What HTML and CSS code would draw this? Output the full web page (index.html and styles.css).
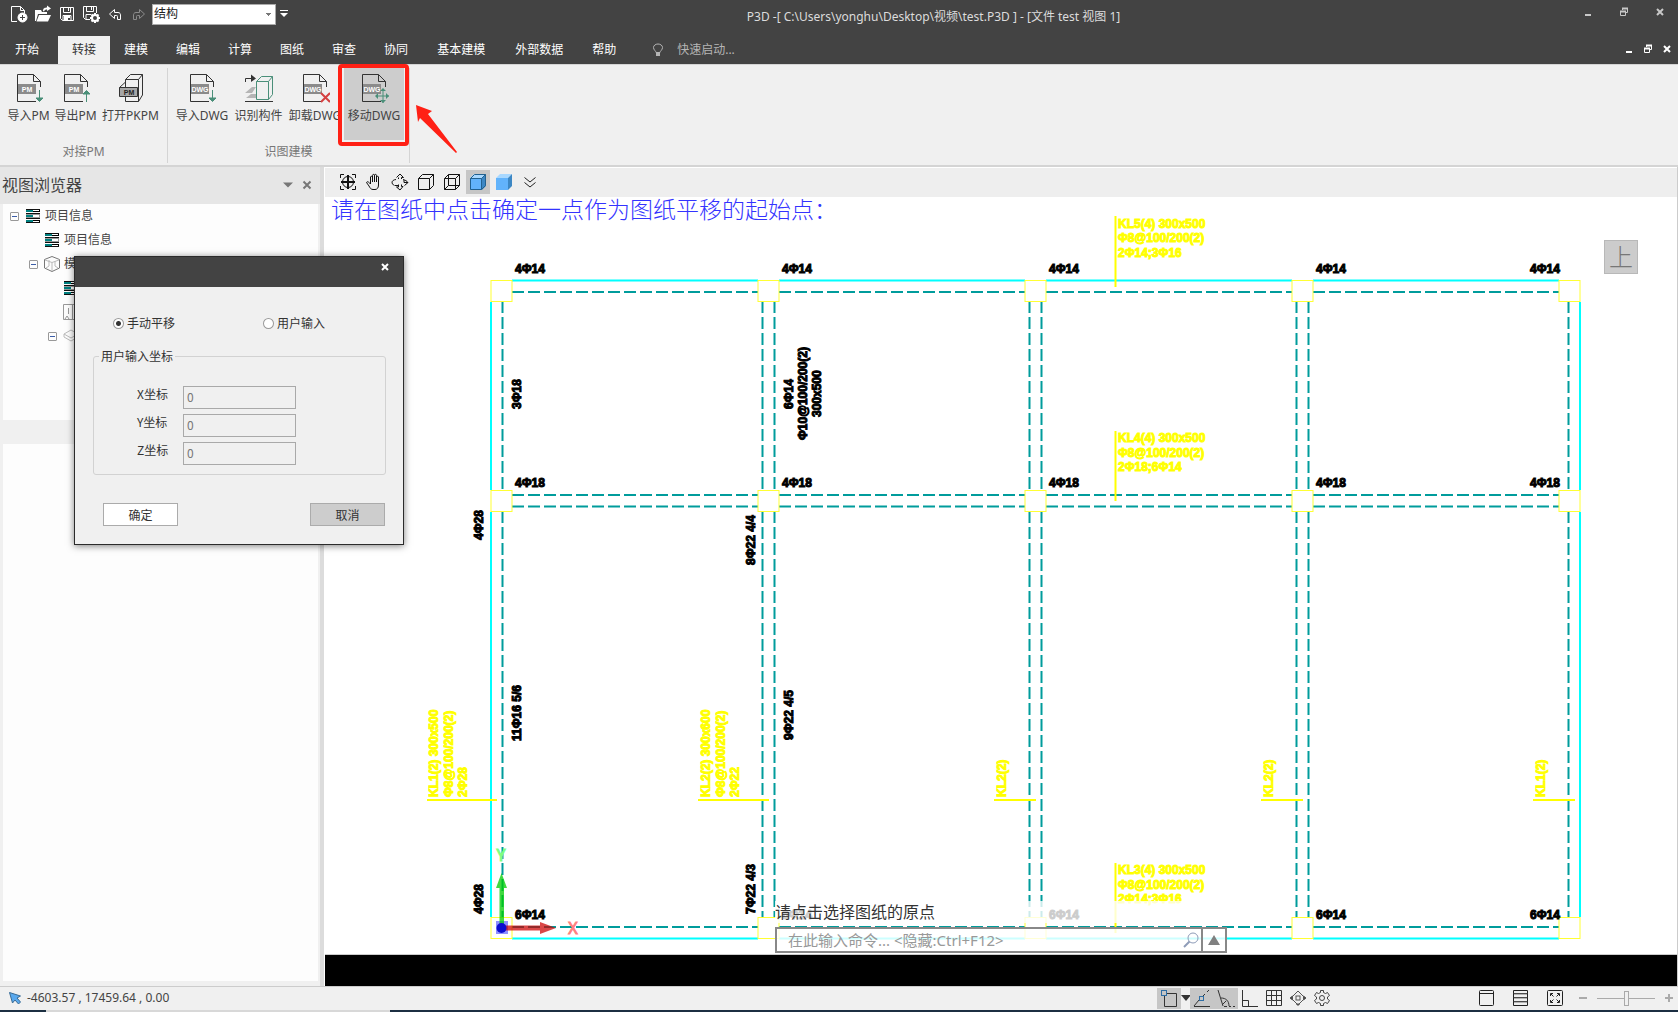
FILE: index.html
```html
<!DOCTYPE html>
<html lang="zh-CN">
<head>
    <meta charset="UTF-8">
    <meta name="viewport" content="width=device-width, initial-scale=1.0">
    <title>P3D</title>
    <link rel="stylesheet" href="styles.css">
</head>
<body>

    <!-- 标题栏 -->
    <header class="header">
        <div class="titlebar">
            <div class="quick">
                <button class="quick-btn" aria-label="新建"><svg width="18" height="18" viewBox="0 0 18 18" fill="none" stroke="#fff"><path d="M7 16.500H1.500V1.500H10.500L14.500 5.500V8M10.500 1.500V5.500H14.500"/><circle cx="12.500" cy="12.500" r="4.500" fill="#fff"/><path d="M12.500 10V15M10 12.500H15" stroke="#434343"/></svg></button>
                <button class="quick-btn" aria-label="打开"><svg width="18" height="18" viewBox="0 0 18 18" fill="#fff"><path d="M1 5H7L8 7H13V9H4L2 16H1ZM5 10H17L14 16.500H2.500ZM9 6C9 3 11 2.500 13 2.500V0.500L17 3.500L13 6V4.500C11.500 4.500 10.500 5 10 6.500Z"/></svg></button>
                <button class="quick-btn" aria-label="保存"><svg width="18" height="18" viewBox="0 0 18 18" fill="none" stroke="#fff"><path d="M2.500 2.500H15.500V15.500H4.500L2.500 13.500ZM5.500 2.500V7.500H12.500V2.500M5 15V10.500H13V15M10.500 3V6"/><path d="M6 12H12M6 14H10" stroke-width="2"/></svg></button>
                <button class="quick-btn" aria-label="另存为"><svg width="18" height="18" viewBox="0 0 18 18" fill="none" stroke="#fff"><path d="M8 14.500H3.500L1.500 12.500V1.500H14.500V8M4.500 1.500V6.500H11.500V1.500M4 14V9.500H9M9.500 2V5"/><circle cx="13" cy="13" r="3" stroke-width="2"/><path d="M13 8V10M13 16V18M8 13H10M16 13H18M9.500 9.500L11 11M15 15L16.500 16.500M9.500 16.500L11 15M15 11L16.500 9.500" stroke-width="2"/></svg></button>
                <button class="quick-btn" aria-label="撤销"><svg width="18" height="18" viewBox="0 0 18 18" fill="none" stroke="#fff"><path d="M8.500 4.500V7.500H12C14 7.500 14.500 9 14.500 10V14.500H11.500V11.500C11.500 10.500 11 10.500 10.500 10.500H8.500V13.500L3.500 9Z"/></svg></button>
                <button class="quick-btn" aria-label="重做"><svg width="18" height="18" viewBox="0 0 18 18" fill="none" stroke="#8b8b8b"><path d="M9.500 4.500V7.500H6C4 7.500 3.500 9 3.500 10V14.500H6.500V11.500C6.500 10.500 7 10.500 7.500 10.500H9.500V13.500L14.500 9Z"/></svg></button>
            </div>
            <select class="mode" aria-label="专业">
                <option>结构</option>
            </select>
            <button class="more" aria-label="自定义"><svg width="8" height="8" viewBox="0 0 8 8"><path d="M0 0.500H8" stroke="#fff"/><path d="M0 3H8L4 7Z" fill="#fff"/></svg></button>
            <h1 class="title">P3D -[ C:\Users\yonghu\Desktop\视频\test.P3D ] - [文件 test 视图 1]</h1>
            <div class="window-btns">
                <button aria-label="最小化"><svg width="10" height="10" viewBox="0 0 10 10"><use href="#win-min"/></svg></button>
                <button aria-label="还原"><svg width="10" height="10" viewBox="0 0 10 10"><use href="#win-restore"/></svg></button>
                <button aria-label="关闭"><svg width="10" height="10" viewBox="0 0 10 10"><use href="#win-close"/></svg></button>
            </div>
        </div>

        <!-- 选项卡 -->
        <nav class="tabs">
            <button class="tab tab-first">开始</button>
            <button class="tab active">转接</button>
            <button class="tab">建模</button>
            <button class="tab">编辑</button>
            <button class="tab">计算</button>
            <button class="tab">图纸</button>
            <button class="tab">审查</button>
            <button class="tab">协同</button>
            <button class="tab tab-wide">基本建模</button>
            <button class="tab tab-wide">外部数据</button>
            <button class="tab">帮助</button>
            <label class="search">
                <svg width="12" height="14" viewBox="0 0 12 14" fill="none" stroke="#b5b5b5"><path d="M4 9.500C4 8 1.500 7 1.500 4.500C1.500 2.500 3.500 1 6 1S10.500 2.500 10.500 4.500C10.500 7 8 8 8 9.500Z"/><path d="M4 11.500H8" stroke-width="3"/></svg>
                <input type="text" placeholder="快速启动..." aria-label="快速启动">
            </label>
            <div class="child-btns">
                <button aria-label="最小化"><svg width="10" height="10" viewBox="0 0 10 10"><use href="#win-min"/></svg></button>
                <button aria-label="还原"><svg width="10" height="10" viewBox="0 0 10 10"><use href="#win-restore"/></svg></button>
                <button aria-label="关闭"><svg width="10" height="10" viewBox="0 0 10 10"><use href="#win-close"/></svg></button>
            </div>
        </nav>
    </header>

    <!-- 共用图形 -->
    <svg class="defs" aria-hidden="true">
        <symbol id="win-min" viewBox="0 0 10 10"><path d="M2 8H8" stroke="currentColor" stroke-width="2"/></symbol>
        <symbol id="win-restore" viewBox="0 0 10 10"><path d="M3.500 3V1.500H8.500V5.500H7M1.500 4.500H6.500V8.500H1.500Z" fill="none" stroke="currentColor"/><path d="M3 1.500H9M1 4.500H7" stroke="currentColor" stroke-width="2"/></symbol>
        <symbol id="win-close" viewBox="0 0 10 10"><path d="M2 2L8 8M8 2L2 8" stroke="currentColor" stroke-width="2"/></symbol>
        <symbol id="sheet" viewBox="0 0 30 30"><path d="M22 28.500H3.500V1.500H19.500L26.500 8.500V14M19.500 1.500V8.500H26.500" fill="none" stroke="#333"/><rect x="4" y="11" width="18" height="10" fill="#8b8b8b"/></symbol>
        <symbol id="list" viewBox="0 0 14 14"><path d="M0 1.500H14M0 12.500H14" stroke="#000" stroke-width="3"/><path d="M6 1.500H13M6 12.500H13" stroke="#fff" stroke-width="1"/><path d="M0 7H14" stroke="#999" stroke-width="4"/><path d="M7 7H13" stroke="#fff" stroke-width="2"/><path d="M0 2H7M0 7H7M0 12H7" stroke="#008080" stroke-width="2"/><path d="M0 0.500H14M0 13.500H14M0 4.500H14M0 9.500H14" stroke="#111"/></symbol>
    </svg>

    <!-- 功能区 -->
    <div class="ribbon">
        <section class="group">
            <div class="group-tools">
                <button class="tool tool-s"><svg width="30" height="30" viewBox="0 0 30 30"><use href="#sheet"/><text x="13" y="19" class="tag">PM</text><path d="M25.500 17V28M22 25H29L25.500 28.500Z" class="mark"/></svg>导入PM</button>
                <button class="tool tool-s"><svg width="30" height="30" viewBox="0 0 30 30"><use href="#sheet"/><text x="13" y="19" class="tag">PM</text><path d="M25.500 29V18M22 21H29L25.500 17.500Z" class="mark"/></svg>导出PM</button>
                <button class="tool tool-l"><svg width="30" height="30" viewBox="0 0 30 30" fill="none" stroke="#333"><path d="M9.500 28.500V6.500L14.500 1.500H26.500V22L22.500 28.500ZM9.500 6.500H22.500V28.500M22.500 6.500L26.500 1.500"/><path d="M3.500 14.500L9 9.500M3.500 14.500H21.500V23.500H3.500Z" fill="#a6a6a6"/><text x="13" y="22" class="tag tag-dark">PM</text></svg>打开PKPM</button>
            </div>
            <div class="group-name">对接PM</div>
        </section>
        <section class="group">
            <div class="group-tools">
                <button class="tool tool-m"><svg width="30" height="30" viewBox="0 0 30 30"><use href="#sheet"/><text x="13" y="19" class="tag">DWG</text><path d="M25.500 17V28M22 25H29L25.500 28.500Z" class="mark"/></svg>导入DWG</button>
                <button class="tool tool-n"><svg width="30" height="30" viewBox="0 0 30 30" fill="none"><path d="M1.500 9V5.500H10M1 28.500H29" stroke="#333"/><path d="M7 1.500L12 5.500L7 9Z" fill="#333"/><path d="M1 20L8 14H12L8 20ZM2 25L7 21H12V25Z" fill="#b5b5b5"/><path d="M12.500 8.500L17.500 3.500H28.500L24.500 8.500ZM12.500 8.500V26.500H24.500V8.500M24.500 26.500L28.500 21.500V3.500" stroke="#4a8f79"/></svg>识别构件</button>
                <button class="tool tool-m"><svg width="30" height="30" viewBox="0 0 30 30"><use href="#sheet"/><text x="13" y="19" class="tag">DWG</text><path d="M21 20L30 29M30 20L21 29" stroke="#d43f3f" stroke-width="2"/></svg>卸载DWG</button>
                <button class="tool tool-m on"><svg width="30" height="30" viewBox="0 0 30 30"><use href="#sheet"/><text x="13" y="19" class="tag">DWG</text><path d="M24 16V30M17 23H30" stroke="#4a8f79"/><path d="M24 15L27 18H21ZM24 30L27 27H21ZM16 23L19 20V26ZM30 23L27 20V26Z" fill="#4a8f79"/></svg>移动DWG</button>
            </div>
            <div class="group-name">识图建模</div>
        </section>
        <div class="callout"></div>
        <svg class="callout-arrow" width="44" height="50" viewBox="0 0 44 50"><path d="M1 0L17 6L13 9L42 47L41 48L5 13L3 17Z" fill="#ff2015"/></svg>
    </div>

    <main class="main">
        <!-- 视图浏览器 -->
        <aside class="side">
            <div class="side-head">
                <h2>视图浏览器</h2>
                <button aria-label="菜单"><svg width="10" height="6" viewBox="0 0 10 6"><path d="M0 0.500H10L5 5.500Z" fill="#777"/></svg></button>
                <button aria-label="关闭面板"><svg width="10" height="10" viewBox="0 0 10 10"><path d="M1.500 1.500L8.500 8.500M8.500 1.500L1.500 8.500" stroke="#777" stroke-width="2"/></svg></button>
            </div>
            <ul class="tree">
                <li class="level-1"><span class="fold"></span><svg width="16" height="14" viewBox="-1 0 16 14"><use href="#list" width="14" height="14"/></svg>项目信息</li>
                <li class="level-2"><svg width="16" height="14" viewBox="-1 0 16 14"><use href="#list" width="14" height="14"/></svg>项目信息</li>
                <li class="level-2 has-fold"><span class="fold"></span><svg width="16" height="16" viewBox="0 0 16 16" fill="none" stroke="#777"><path d="M8 0.500L15.500 3.500V12L8 15.500L0.500 12V3.500Z"/><path d="M1 4L8 6.500L15 4M8 6.500V15M5 4V10L2 12M11 5V10L14 12" stroke="#bbb"/></svg>模型</li>
                <li class="level-3"><svg width="16" height="14" viewBox="-1 0 16 14"><use href="#list" width="14" height="14"/></svg></li>
                <li class="level-3"><svg width="16" height="16" viewBox="0 0 16 16" fill="none" stroke="#999"><path d="M0.500 0.500H15.500V15.500H0.500ZM9.500 0V15M5.500 4V10M2 15L4 12L6 15"/></svg></li>
                <li class="level-3 has-fold"><span class="fold"></span><svg width="16" height="14" viewBox="0 0 16 14" fill="none" stroke="#bbb"><path d="M1 5L8 1L15 5L8 9ZM1 8L8 12L15 8M1 5V8"/></svg></li>
            </ul>
            <div class="props"></div>
        </aside>
        <div class="splitter"></div>

        <section class="viewport">
            <div class="view-tools">
                <button aria-label="全图"><svg width="18" height="18" viewBox="0 0 18 18" fill="none" stroke="#111"><path d="M1.500 5V1.500H5M13 1.500H16.500V5M16.500 13V16.500H13M5 16.500H1.500V13"/><circle cx="9" cy="9" r="5.500"/><path d="M9 2V16M2 9H16" stroke-width="2"/></svg></button>
                <button aria-label="平移"><svg width="18" height="18" viewBox="0 0 18 18" fill="none" stroke="#111"><path d="M5.500 11V4C5.500 3 7.500 3 7.500 4V9V2.500C7.500 1 9.500 1 9.500 2.500V9V2.500C9.500 1 11.500 1 11.500 2.500V9V4C11.500 3 13.500 3 13.500 4V12C13.500 15 12 16.500 10 16.500H8C6 16.500 5 15 4 13L1.500 9.500C2 8 4 9 5.500 11"/></svg></button>
                <button aria-label="旋转"><svg width="18" height="18" viewBox="0 0 18 18" fill="none" stroke="#111"><path d="M5.500 4.500L9 1L12.500 4.500H10.500V6M7.500 6V4.500M3.500 12.500C0 11 0 7 5 6.500M12 6.500C14 7 16 8 17 9.500L13.500 12.500M7.500 11.500V14H5.500L9 17L12 13.500H10.500V11.500M4 12.500H7M13 7V9.500H17"/></svg></button>
                <button aria-label="线框"><svg width="18" height="18" viewBox="0 0 18 18" fill="none" stroke="#111"><path d="M1.500 5.500H12.500V16.500H1.500ZM1.500 5.500L5.500 1.500H16.500V12.500L12.500 16.500M12.500 5.500L16.500 1.500"/></svg></button>
                <button aria-label="透视线框"><svg width="18" height="18" viewBox="0 0 18 18" fill="none" stroke="#111"><path d="M1.500 5.500H12.500V16.500H1.500ZM1.500 5.500L5.500 1.500H16.500V12.500L12.500 16.500M12.500 5.500L16.500 1.500M5.500 1.500V12.500H16.500M5.500 12.500L1.500 16.500"/></svg></button>
                <button class="on" aria-label="着色带边"><svg width="18" height="18" viewBox="0 0 18 18"><path d="M1 5L5 1H17L13 5Z" fill="#a8d8ff"/><path d="M13 5L17 1V13L13 17Z" fill="#3c87c4"/><path d="M1 5H13V17H1Z" fill="#62b3fb"/><path d="M1.500 5.500H12.500V16.500H1.500ZM1.500 5.500L5.500 1.500H16.500V12.500L12.500 16.500M12.500 5.500L16.500 1.500" fill="none" stroke="#22618f"/></svg></button>
                <button aria-label="着色"><svg width="18" height="18" viewBox="0 0 18 18"><path d="M1 5L5 1H17L13 5Z" fill="#a8d8ff"/><path d="M13 5L17 1V13L13 17Z" fill="#3c87c4"/><path d="M1 5H13V17H1Z" fill="#62b3fb"/></svg></button>
                <button aria-label="更多"><svg width="18" height="18" viewBox="0 0 18 18" fill="none" stroke="#222"><path d="M3.500 4.500L9 9L14.500 4.500M3.500 9.500L9 14L14.500 9.500"/></svg></button>
            </div>

            <div class="canvas">
                <svg class="drawing" viewBox="325 197 1352 757" preserveAspectRatio="xMinYMin meet">
                    <!-- 外边线 -->
                    <g class="edge">
                        <path d="M512 280.500H758M779 280.500H1025M1046 280.500H1292M1313 280.500H1559"/>
                        <path d="M512 938.500H758M779 938.500H1025M1046 938.500H1292M1313 938.500H1559"/>
                        <path d="M491 302V490M491 512V917M1580 302V490M1580 512V917"/>
                    </g>

                    <!-- 水平梁 -->
                    <g class="beam">
                        <path d="M512 292H758M779 292H1025M1046 292H1292M1313 292H1559"/>
                        <path d="M512 495H758M779 495H1025M1046 495H1292M1313 495H1559"/>
                        <path d="M512 506.500H758M779 506.500H1025M1046 506.500H1292M1313 506.500H1559"/>
                        <path d="M512 927H758M779 927H1025M1046 927H1292M1313 927H1559"/>
                    </g>

                    <!-- 竖向梁 -->
                    <g class="beam">
                        <path d="M502.500 301V490M762.500 301V490M774.500 301V490M1029.500 301V490M1041.500 301V490M1296.500 301V490M1308.500 301V490M1568.500 301V490"/>
                        <path d="M502.500 511V918M762.500 511V918M774.500 511V918M1029.500 511V918M1041.500 511V918M1296.500 511V918M1308.500 511V918M1568.500 511V918"/>
                    </g>

                    <!-- 柱 -->
                    <g class="column">
                        <rect x="491" y="280.500" width="21" height="21"/>
                        <rect x="758" y="280.500" width="21" height="21"/>
                        <rect x="1025" y="280.500" width="21" height="21"/>
                        <rect x="1292" y="280.500" width="21" height="21"/>
                        <rect x="1559" y="280.500" width="21" height="21"/>
                        <rect x="491" y="490.500" width="21" height="21"/>
                        <rect x="758" y="490.500" width="21" height="21"/>
                        <rect x="1025" y="490.500" width="21" height="21"/>
                        <rect x="1292" y="490.500" width="21" height="21"/>
                        <rect x="1559" y="490.500" width="21" height="21"/>
                        <rect x="491" y="917.500" width="21" height="21"/>
                        <rect x="758" y="917.500" width="21" height="21"/>
                        <rect x="1025" y="917.500" width="21" height="21"/>
                        <rect x="1292" y="917.500" width="21" height="21"/>
                        <rect x="1559" y="917.500" width="21" height="21"/>
                    </g>

                    <!-- 配筋标注 -->
                    <g class="rebar">
                        <text x="515" y="273">4Φ14</text>
                        <text x="782" y="273">4Φ14</text>
                        <text x="1049" y="273">4Φ14</text>
                        <text x="1316" y="273">4Φ14</text>
                        <text x="1530" y="273">4Φ14</text>
                        <text x="515" y="487">4Φ18</text>
                        <text x="782" y="487">4Φ18</text>
                        <text x="1049" y="487">4Φ18</text>
                        <text x="1316" y="487">4Φ18</text>
                        <text x="1530" y="487">4Φ18</text>
                        <text x="515" y="919">6Φ14</text>
                        <text x="782" y="919">6Φ14</text>
                        <text x="1049" y="919">6Φ14</text>
                        <text x="1316" y="919">6Φ14</text>
                        <text x="1530" y="919">6Φ14</text>
                        <text transform="translate(521 409) rotate(-90)">3Φ18</text>
                        <text transform="translate(793 409) rotate(-90)">6Φ14</text>
                        <text transform="translate(807 440) rotate(-90)">Φ10@100/200(2)</text>
                        <text transform="translate(821 417) rotate(-90)">300x500</text>
                        <text transform="translate(483 540) rotate(-90)">4Φ28</text>
                        <text transform="translate(755 565) rotate(-90)">8Φ22 4/4</text>
                        <text transform="translate(521 741) rotate(-90)">11Φ16 5/6</text>
                        <text transform="translate(793 740) rotate(-90)">9Φ22 4/5</text>
                        <text transform="translate(483 914) rotate(-90)">4Φ28</text>
                        <text transform="translate(755 914) rotate(-90)">7Φ22 4/3</text>
                    </g>

                    <!-- 集中标注 -->
                    <g class="note">
                        <path d="M1115.500 216V287M1115.500 431V501M1115.500 863V933"/>
                        <text x="1118" y="228">KL5(4) 300x500</text>
                        <text x="1118" y="242">Φ8@100/200(2)</text>
                        <text x="1118" y="257">2Φ14;3Φ16</text>
                        <text x="1118" y="442">KL4(4) 300x500</text>
                        <text x="1118" y="457">Φ8@100/200(2)</text>
                        <text x="1118" y="471">2Φ18;6Φ14</text>
                        <text x="1118" y="874">KL3(4) 300x500</text>
                        <text x="1118" y="889">Φ8@100/200(2)</text>
                        <text x="1118" y="903">2Φ14;3Φ16</text>
                        <path d="M427 800H497M698 800H769M994 800H1036M1261 800H1303M1533 800H1575"/>
                        <text transform="translate(438 797) rotate(-90)">KL1(2) 300x500</text>
                        <text transform="translate(453 797) rotate(-90)">Φ8@100/200(2)</text>
                        <text transform="translate(467 797) rotate(-90)">2Φ28</text>
                        <text transform="translate(710 797) rotate(-90)">KL2(2) 300x600</text>
                        <text transform="translate(725 797) rotate(-90)">Φ8@100/200(2)</text>
                        <text transform="translate(739 797) rotate(-90)">2Φ22</text>
                        <text transform="translate(1006 797) rotate(-90)">KL2(2)</text>
                        <text transform="translate(1273 797) rotate(-90)">KL2(2)</text>
                        <text transform="translate(1545 797) rotate(-90)">KL1(2)</text>
                    </g>

                    <!-- 坐标轴 -->
                    <g class="axis">
                        <rect x="496" y="921" width="12" height="13" fill="#9090ff"/>
                        <path d="M499.500 926V888H496L501.500 873L507 888H504V926Z" fill="#00cc00" fill-opacity="0.75"/>
                        <path d="M504 925.500H540V922L556 928L540 934V930.500H504Z" fill="#cc0000" fill-opacity="0.72"/>
                        <circle cx="501.500" cy="928" r="5" fill="#0c0ccf"/>
                        <text x="501" y="861" fill="#80ff80" stroke="#80ff80">Y</text>
                        <text x="573" y="934" fill="#ff8080" stroke="#ff8080">X</text>
                    </g>
                </svg>

                <p class="hint">请在图纸中点击确定一点作为图纸平移的起始点：</p>
                <button class="view-cube">上</button>

                <div class="command">
                    <label for="cmd">请点击选择图纸的原点</label>
                    <div class="command-box">
                        <input id="cmd" type="text" placeholder="在此输入命令... &lt;隐藏:Ctrl+F12&gt;">
                        <svg width="16" height="16" viewBox="0 0 16 16" fill="none" stroke="#8e9cb8"><circle cx="10" cy="6" r="5"/><path d="M6.500 9.500L1 15" stroke-width="2"/></svg>
                        <button aria-label="展开"><svg width="12" height="10" viewBox="0 0 12 10"><path d="M6 0L12 10H0Z" fill="#808080"/></svg></button>
                    </div>
                </div>
            </div>
            <div class="log"></div>
        </section>
    </main>

    <!-- 状态栏 -->
    <footer class="status">
        <svg width="14" height="14" viewBox="0 0 14 14"><path d="M1.500 1.500L12.500 5L9 7L12.500 11L10.500 13L7 9L4.500 12Z" fill="#5aa9ee" stroke="#3a6c96"/></svg>
        <span class="coords">-4603.57 , 17459.64 , 0.00</span>
        <div class="snaps">
            <button class="on" aria-label="捕捉"><svg width="18" height="18" viewBox="0 0 18 18" fill="none" stroke="#333"><path d="M7 4.500H16.500V17.500H4.500V7"/><rect x="1.500" y="1.500" width="5" height="5" stroke="#2f6ea5"/></svg></button>
            <button class="drop" aria-label="捕捉选项"><svg width="10" height="6" viewBox="0 0 10 6"><path d="M0 0H10L5 6Z" fill="#333"/></svg></button>
            <button class="on" aria-label="最近点"><svg width="18" height="18" viewBox="0 0 18 18" fill="none" stroke="#333"><path d="M1 17.500H17M1 17L6 11M10 7L12 5M14 3L16 1"/><rect x="6.500" y="7.500" width="4" height="4" stroke="#2f6ea5"/></svg></button>
            <button class="on" aria-label="极轴"><svg width="18" height="18" viewBox="0 0 18 18" fill="none" stroke="#333"><path d="M1 1L6 17M4 9C9 9 12 12 12 17M5 16L9 12M7 17.500H10M12 17.500H14M16 17.500H18"/></svg></button>
            <button aria-label="正交"><svg width="18" height="18" viewBox="0 0 18 18" fill="none" stroke="#333"><path d="M1.500 1V17.500H17M2 11.500H7.500V17"/></svg></button>
            <button aria-label="栅格"><svg width="18" height="18" viewBox="0 0 18 18" fill="none" stroke="#333"><path d="M1.500 1.500H16.500V16.500H1.500ZM6.500 1V17M11.500 1V17M1 6.500H17M1 11.500H17"/></svg></button>
            <button aria-label="定位"><svg width="18" height="18" viewBox="0 0 18 18" fill="none" stroke="#555"><path d="M4 7L9 2L14 7M4 11L9 16L14 11"/><rect x="7" y="7" width="4" height="4"/><path d="M1 9L3.500 7V11ZM17 9L14.500 7V11ZM9 16.500L7.500 15H10.500Z" fill="#444"/></svg></button>
            <button aria-label="设置"><svg width="18" height="18" viewBox="0 0 18 18" fill="none" stroke="#444"><path d="M7.500 1.500H10.500V3.500L12.500 4.500L14.500 3.500L16.500 6.500L14.500 8V10L16.500 11.500L14.500 14.500L12.500 13.500L10.500 14.500V16.500H7.500V14.500L5.500 13.500L3.500 14.500L1.500 11.500L3.500 10V8L1.500 6.500L3.500 3.500L5.500 4.500L7.500 3.500Z"/><circle cx="9" cy="9" r="2.500"/></svg></button>
        </div>
        <div class="layouts">
            <button aria-label="单视图"><svg width="18" height="18" viewBox="0 0 18 18" fill="none" stroke="#222"><rect x="1.500" y="1.500" width="14" height="15" rx="1"/><path d="M2 4.500H15"/></svg></button>
            <button aria-label="列表"><svg width="18" height="18" viewBox="0 0 18 18" fill="none" stroke="#222"><path d="M1.500 1.500H15.500V4.500H1.500ZM1.500 4.500H15.500V8.500H1.500ZM1.500 8.500H15.500V12.500H1.500ZM1.500 12.500H15.500V16.500H1.500Z"/><path d="M2 5H15M2 9H15M2 13H15" stroke="#777"/></svg></button>
            <button aria-label="全屏"><svg width="18" height="18" viewBox="0 0 18 18" fill="none" stroke="#222"><rect x="1.500" y="1.500" width="15" height="15" rx="1"/><path d="M4.500 7V4.500H7M5 5L7.500 7.500M11 4.500H13.500V7M13 5L10.500 7.500M4.500 11V13.500H7M5 13L7.500 10.500M11 13.500H13.500V11M13 13L10.500 10.500"/></svg></button>
        </div>
        <div class="zoom">
            <button aria-label="缩小"><svg width="8" height="8" viewBox="0 0 8 8"><path d="M0 4H8" stroke="#aaa" stroke-width="2"/></svg></button>
            <input type="range" min="0" max="100" value="50" aria-label="缩放">
            <button aria-label="放大"><svg width="8" height="8" viewBox="0 0 8 8"><path d="M0 4H8M4 0V8" stroke="#aaa" stroke-width="2"/></svg></button>
        </div>
    </footer>
    <div class="taskbar"><span></span></div>

    <!-- 移动DWG对话框 -->
    <form class="dialog" role="dialog" aria-label="移动DWG">
        <div class="dialog-head">
            <button type="button" aria-label="关闭"><svg width="10" height="10" viewBox="0 0 10 10"><use href="#win-close"/></svg></button>
        </div>
        <div class="dialog-body">
            <div class="choices">
                <label><input type="radio" name="way" checked>手动平移</label>
                <label><input type="radio" name="way">用户输入</label>
            </div>
            <fieldset>
                <legend>用户输入坐标</legend>
                <div class="field"><label for="px">X坐标</label><input id="px" type="text" value="0" disabled></div>
                <div class="field"><label for="py">Y坐标</label><input id="py" type="text" value="0" disabled></div>
                <div class="field"><label for="pz">Z坐标</label><input id="pz" type="text" value="0" disabled></div>
            </fieldset>
            <div class="actions">
                <button type="button">确定</button>
                <button type="button" class="cancel">取消</button>
            </div>
        </div>
    </form>

</body>
</html>
```
FILE: styles.css
```css
* {
    margin: 0;
    padding: 0;
    box-sizing: border-box;
}

body {
    height: 100vh;
    display: flex;
    flex-direction: column;
    overflow: hidden;
    font-family: "Noto Sans", "Noto Sans CJK SC", sans-serif;
    font-size: 12px;
    line-height: 16px;
    color: #444;
    background-color: #f0f0f0;
}

button,
input,
select {
    font: inherit;
    color: inherit;
    background: none;
    border: none;
    border-radius: 0;
}

button {
    display: flex;
    align-items: center;
    justify-content: center;
}

svg {
    flex: none;
}

.defs {
    position: absolute;
    width: 0;
    height: 0;
}

/* 标题栏 */
.header {
    background-color: #434343;
    color: #fff;
}

.titlebar {
    display: flex;
    align-items: center;
    height: 28px;
    margin-bottom: 8px;
}

.quick {
    display: flex;
    gap: 6px;
    padding-left: 10px;
}

.quick-btn {
    width: 18px;
    height: 18px;
}

.mode {
    appearance: none;
    width: 124px;
    height: 21px;
    margin-left: 4px;
    padding: 0 1px;
    border: 1px solid #ababab;
    color: #222;
    background: linear-gradient(#777, #777) 113px 8px / 5px 1px no-repeat,
                linear-gradient(#777, #777) 114px 9px / 3px 1px no-repeat,
                linear-gradient(#777, #777) 115px 10px / 1px 1px no-repeat, #fff;
}

.more {
    width: 16px;
    height: 20px;
}

.title {
    flex: 1;
    text-align: center;
    padding: 6px 8px 0 0;
    font-size: 12px;
    font-weight: normal;
    color: #dcdcdc;
}

.window-btns {
    display: flex;
    gap: 26px;
    margin: -4px 13px 0 0;
    color: #c8c8c8;
}

/* 选项卡 */
.tabs {
    display: flex;
    height: 28px;
    padding-left: 1px;
}

.tab {
    padding: 0 14px;
}

.tab-first {
    margin-right: 5px;
}

.tab-wide {
    padding: 0 15px;
}

.tab.active {
    background-color: #f0f0f0;
    color: #333;
}

.search {
    display: flex;
    align-items: center;
    gap: 13px;
    flex: 1;
    margin-left: 22px;
}

.search input {
    width: 160px;
}

.search input::placeholder {
    color: #b5b5b5;
}

.child-btns {
    display: flex;
    gap: 9px;
    margin-right: 6px;
}

.child-btns button {
    height: 26px;
}

/* 功能区 */
.ribbon {
    position: relative;
    display: flex;
    height: 103px;
    padding: 3px 0 2px;
    border-top: 1px solid #d4d4d4;
    border-bottom: 2px solid #d4d4d4;
}

.group {
    display: flex;
    flex-direction: column;
    justify-content: space-between;
    padding: 0 5px 3px;
    border-right: 1px solid #d4d4d4;
}

.group-tools {
    display: flex;
}

.tool {
    flex-direction: column;
    justify-content: flex-start;
    gap: 5px;
    height: 72px;
    padding-top: 5px;
    white-space: nowrap;
}

.tool-s {
    width: 47px;
}

.tool-l {
    width: 63px;
}

.tool-m {
    width: 58px;
}

.tool-n {
    width: 55px;
}

.tool.on {
    width: 60px;
    background-color: #cdcdcd;
}

.tag {
    font-family: "Liberation Sans", sans-serif;
    font-size: 7px;
    font-weight: bold;
    text-anchor: middle;
    fill: #fff;
    stroke: none;
}

.tag-dark {
    fill: #222;
}

.mark {
    fill: #4a8f79;
    stroke: #4a8f79;
}

.group-name {
    text-align: center;
    color: #777;
}

.callout {
    position: absolute;
    left: 338px;
    top: -1px;
    width: 71px;
    height: 82px;
    border: 4px solid #ff2015;
    border-radius: 4px;
}

.callout-arrow {
    position: absolute;
    left: 415px;
    top: 40px;
}

/* 主区域 */
.main {
    flex: 1;
    display: flex;
    min-height: 0;
    border-right: 1px solid #ccc;
}

.side {
    width: 320px;
    display: flex;
    flex-direction: column;
    padding-bottom: 5px;
}

.side-head {
    display: flex;
    align-items: center;
    gap: 9px;
    height: 37px;
    padding: 0 8px 2px 2px;
    background-color: #e6e6e6;
}

.side-head h2 {
    flex: 1;
    font-size: 16px;
    font-weight: normal;
}

.tree {
    height: 216px;
    margin: 0 2px 0 3px;
    list-style: none;
    background-color: #fdfdfd;
}

.tree li {
    display: flex;
    align-items: center;
    gap: 4px;
    height: 24px;
}

.level-1 {
    padding-left: 7px;
}

.level-2 {
    padding-left: 41px;
}

.level-3 {
    padding-left: 60px;
}

.level-2.has-fold {
    padding-left: 26px;
}

.level-3.has-fold {
    padding-left: 45px;
}

.fold {
    width: 9px;
    height: 9px;
    margin-right: 2px;
    border: 1px solid #999;
    border-radius: 1px;
    background: linear-gradient(#3c5ea8, #3c5ea8) center / 5px 1px no-repeat;
}

.props {
    flex: 1;
    margin: 24px 2px 0 3px;
    background-color: #fdfdfd;
}

.splitter {
    width: 5px;
    background-color: #dcdcdc;
    border-right: 1px solid #fff;
}

.viewport {
    flex: 1;
    min-width: 0;
    display: flex;
    flex-direction: column;
    border-top: 1px solid #fff;
}

.view-tools {
    display: flex;
    align-items: center;
    gap: 2px;
    height: 29px;
    padding: 0 0 2px 11px;
    background-color: #eee;
}

.view-tools button {
    width: 24px;
    height: 24px;
}

.view-tools .on,
.snaps .on {
    background-color: #c6c6c6;
}

.canvas {
    position: relative;
    flex: 1;
    min-height: 0;
    background-color: #fff;
}

.drawing {
    display: block;
    width: 100%;
    height: 100%;
}

.edge {
    fill: none;
    stroke: #00ffff;
    stroke-width: 2;
}

.beam {
    fill: none;
    stroke: #009c9c;
    stroke-width: 2;
    stroke-dasharray: 12 4;
}

.column {
    fill: #fff;
    stroke: #ffff33;
    stroke-width: 1;
}

.rebar,
.note {
    font-family: "Liberation Sans", sans-serif;
    font-size: 12px;
    font-weight: bold;
    fill: #000;
    stroke: #000;
    stroke-width: 1;
}

.note {
    fill: #ffff00;
    stroke: #ffff00;
}

.note path {
    stroke-width: 2;
}

.axis text {
    font-size: 16px;
    text-anchor: middle;
}

.hint {
    position: absolute;
    left: 6px;
    top: -2px;
    font-family: "Noto Sans CJK SC", sans-serif;
    font-size: 23px;
    font-weight: 300;
    line-height: 26px;
    color: #3333ff;
}

.view-cube {
    position: absolute;
    top: 43px;
    right: 39px;
    width: 34px;
    height: 34px;
    border: 1px solid #b8b8b8;
    background-color: #ccc;
    color: #777;
    font-size: 24px;
    font-weight: 300;
}

/* 命令行 */
.command {
    position: absolute;
    left: 50%;
    bottom: 1px;
    width: 452px;
    transform: translateX(-50%);
}

.command label {
    display: block;
    height: 22px;
    margin-bottom: 4px;
    font-size: 16px;
    line-height: 22px;
    color: #333;
    background-color: rgba(255, 255, 255, 0.8);
}

.command-box {
    display: flex;
    align-items: center;
    height: 26px;
    border: 2px solid #888;
    background-color: rgba(255, 255, 255, 0.8);
}

.command-box input {
    flex: 1;
    padding-left: 11px;
    font-size: 15px;
}

.command-box input::placeholder {
    color: #999;
}

.command-box button {
    width: 24px;
    height: 22px;
    margin-left: 2px;
    border-left: 2px solid #888;
}

.log {
    height: 32px;
    border-top: 1px solid #ccc;
    background-color: #000;
}

/* 状态栏 */
.status {
    display: flex;
    align-items: center;
    height: 24px;
    padding: 0 5px 1px 8px;
    border-top: 1px solid #ccc;
}

.coords {
    flex: 1;
    margin-left: 5px;
}

.snaps,
.layouts,
.zoom {
    display: flex;
    align-items: center;
}

.snaps button {
    width: 24px;
    height: 21px;
}

.snaps .drop {
    width: 9px;
}

.layouts {
    gap: 16px;
    margin: 0 15px 0 144px;
}

.zoom {
    gap: 10px;
}

.zoom input {
    appearance: none;
    width: 58px;
    height: 16px;
    background: linear-gradient(#aaa, #aaa) center / 100% 1px no-repeat;
}

.zoom input::-webkit-slider-thumb {
    appearance: none;
    width: 5px;
    height: 15px;
    border: 1px solid #aaa;
    background-color: #f0f0f0;
}

.taskbar {
    height: 2px;
    padding-left: 46px;
    background-color: #1c2f42;
}

.taskbar span {
    display: block;
    width: 344px;
    height: 2px;
    background-color: #d8d8d8;
}

/* 对话框 */
.dialog {
    position: absolute;
    left: 74px;
    top: 256px;
    width: 330px;
    border: 1px solid #2b2b2b;
    background-color: #f0f0f0;
    box-shadow: 0 1px 7px rgba(0, 0, 0, 0.5);
    font-family: "Noto Sans CJK SC", sans-serif;
    color: #333;
}

.dialog-head {
    display: flex;
    justify-content: flex-end;
    height: 30px;
    padding: 5px 13px 15px;
    background-color: #434343;
    color: #fff;
}

.dialog-body {
    padding: 28px 17px 18px 18px;
}

.choices {
    display: flex;
    gap: 88px;
    padding-left: 20px;
}

.choices label {
    display: flex;
    align-items: center;
    gap: 3px;
    width: 62px;
    white-space: nowrap;
}

.choices input {
    appearance: none;
    width: 11px;
    height: 11px;
    border: 1px solid #999;
    border-radius: 50%;
    background-color: #fff;
}

.choices input:checked {
    background-image: radial-gradient(#333 0 2px, #fff 3px);
}

fieldset {
    height: 127px;
    margin-top: 17px;
    padding-top: 22px;
    border: 1px solid #d2d2d2;
    border-radius: 3px;
}

legend {
    margin-left: 5px;
    padding: 0 2px;
}

.field {
    display: flex;
    margin-bottom: 5px;
    padding-left: 43px;
}

.field label {
    width: 46px;
}

.field input {
    width: 113px;
    height: 23px;
    padding: 0 3px 2px;
    border: 1px solid #a9a9a9;
    color: #777;
}

.actions {
    display: flex;
    justify-content: space-between;
    margin-top: 28px;
    padding: 0 1px 0 10px;
}

.actions button {
    width: 75px;
    height: 23px;
    border: 1px solid #ababab;
    background-color: #fff;
}

.actions .cancel {
    background-color: #cdcdcd;
}
```
